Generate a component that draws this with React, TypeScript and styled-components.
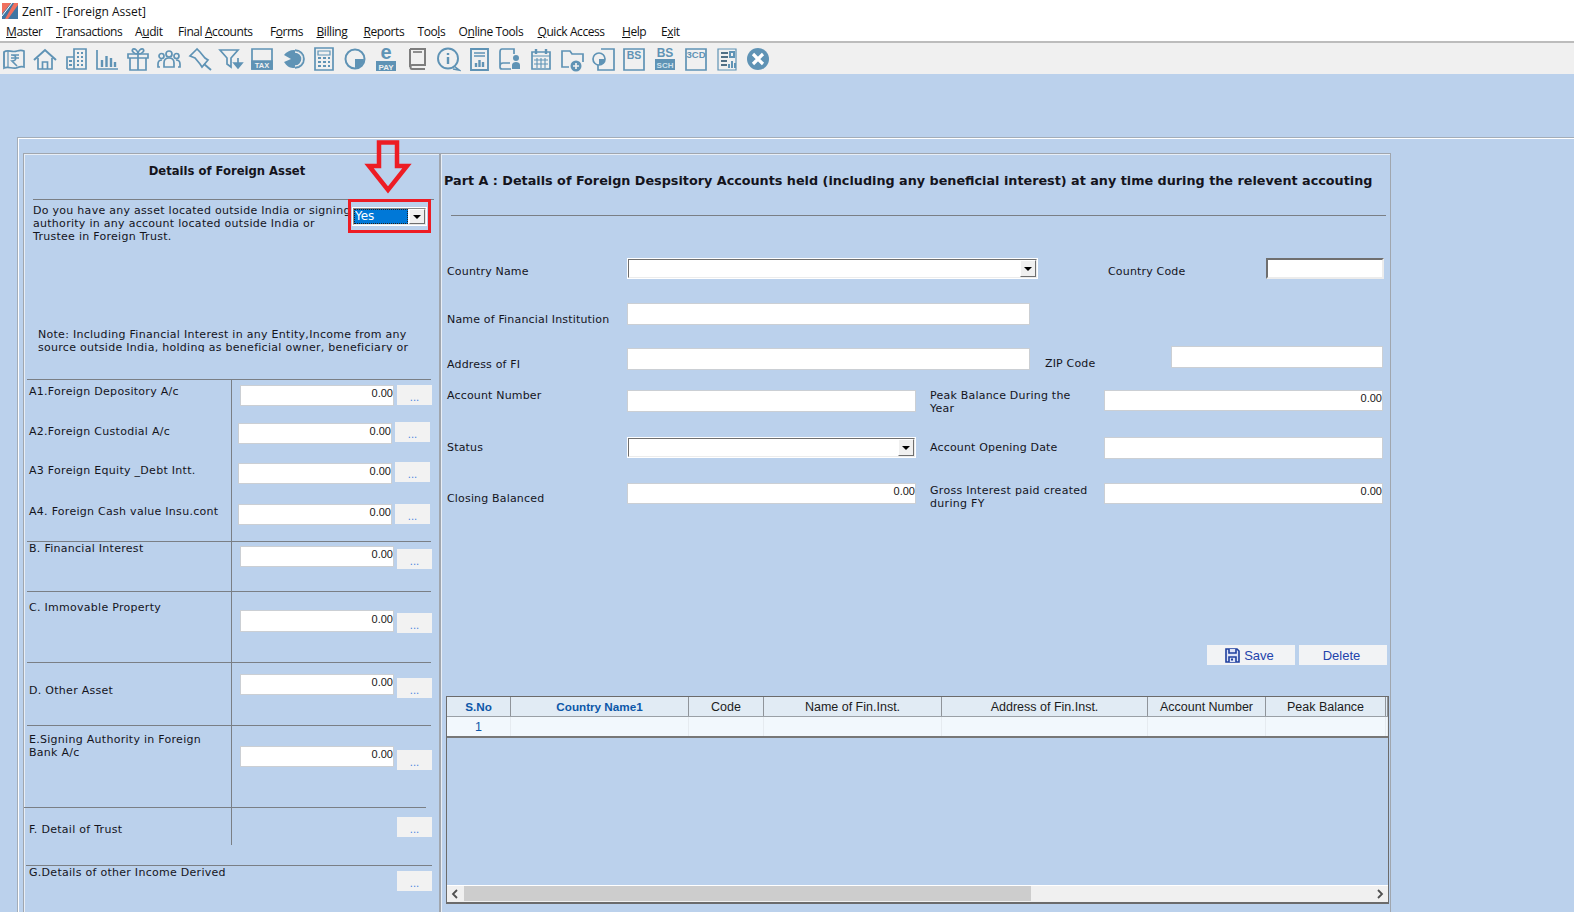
import React from 'react'
import styled, { createGlobalStyle } from 'styled-components'

const GlobalStyle = createGlobalStyle`
  html, body {
    margin: 0;
    padding: 0;
    width: 1574px;
    height: 912px;
    overflow: hidden;
    background: #bbd1ec;
    font-family: 'DejaVu Sans', Verdana, sans-serif;
    font-size: 11px;
    color: #14141c;
  }
  * { box-sizing: border-box; }
`

const Page = styled.div`
  width: 1574px;
  height: 912px;
  display: flex;
  flex-direction: column;
  overflow: hidden;
`

const TitleBar = styled.div`
  height: 22px;
  background: #fff;
  display: flex;
  align-items: center;
  gap: 4px;
  padding-left: 2px;
  font-family: 'Open Sans', 'Noto Sans', sans-serif;
  font-size: 12px;
  color: #111;
`

const MenuBar = styled.div`
  height: 19px;
  background: #fff;
  display: flex;
  align-items: center;
  padding-left: 6px;
  font-family: 'Open Sans', 'Noto Sans', sans-serif;
  font-size: 12px;
  letter-spacing: -0.42px;
  color: #111;
`

const MenuItem = styled.span<{ $w: number }>`
  width: ${(p) => p.$w}px;
  flex: none;
  white-space: nowrap;
`

const Toolbar = styled.div`
  height: 33px;
  background: #f0f0f0;
  border-top: 2px solid #bcbcbc;
  display: flex;
  align-items: center;
  gap: 5.03px;
  padding-left: 1px;
`

const ToolIcon = styled.svg`
  width: 26px;
  height: 26px;
  flex: none;
  fill: none;
  stroke: #5f93b5;
  stroke-width: 1.7;
  text { stroke: none; font-family: 'Liberation Sans', sans-serif; font-weight: 700; }
`

const Desk = styled.div`
  flex: 1;
  padding: 63px 0 0 17px;
  min-height: 0;
`

const Frame = styled.div`
  height: 100%;
  border-top: 1px solid #a3adb8;
  border-left: 1px solid #a3adb8;
  box-shadow: inset 1px 1px 0 #fff;
  padding: 15px 0 0 5px;
  display: flex;
`

const Panel = styled.div<{ $w: number }>`
  position: relative;
  width: ${(p) => p.$w}px;
  flex: none;
  border: 1px solid #a0a6ae;
  box-shadow: inset 1px 1px 0 #e8eef6;
  border-bottom: none;
`

const SidePanel = styled(Panel)`
  letter-spacing: 0.28px;
`

const FormPanel = styled(Panel)`
  letter-spacing: 0.17px;
`

const SideTitle = styled.div`
  height: 45px;
  padding-top: 10px;
  text-align: center;
  font-weight: 700;
  font-size: 11.6px;
  letter-spacing: 0;
  line-height: 15px;
  padding-right: 9px;
`

const Rule = styled.div<{ $from: number; $to: number }>`
  height: 1px;
  background: #7a7f85;
  margin-left: ${(p) => p.$from - 24}px;
  width: ${(p) => p.$to - p.$from}px;
`

const Question = styled.div`
  height: 128px;
  padding: 4px 0 0 9px;
  width: 329px;
  line-height: 13px;
`

const Note = styled.div`
  height: 24px;
  margin-left: 14px;
  width: 376px;
  line-height: 13px;
  overflow: hidden;
  margin-bottom: 27px;
`

const SummaryRow = styled.div<{ $h: number }>`
  height: ${(p) => p.$h}px;
  display: flex;
  align-items: flex-start;
`

const RowLabel = styled.div<{ $top: number; $rule?: number; $plain?: boolean }>`
  width: 208px;
  flex: none;
  height: ${(p) => (p.$rule ? `${p.$rule}px` : '100%')};
  padding: ${(p) => p.$top}px 0 0 5px;
  line-height: 13px;
  border-right: 1px solid ${(p) => (p.$plain ? 'transparent' : '#7a7f85')};
  white-space: pre-line;
`

const RowFields = styled.div<{ $x: number }>`
  flex: 1;
  display: flex;
  align-items: flex-start;
  justify-content: flex-end;
  padding-right: ${(p) => (p.$x === 5 ? 9 : 7)}px;
`

const Amount = styled.input<{ $top: number; $h?: number }>`
  width: 154px;
  height: ${(p) => p.$h ?? 21}px;
  margin-top: ${(p) => p.$top}px;
  margin-right: 3px;
  border: 1px solid #cbcfd4;
  background: #fff;
  padding: 0 0 5px 0;
  text-align: right;
  font-family: 'Liberation Sans', sans-serif;
  font-size: 11px;
  color: #181818;
  outline: none;
`

const DotsButton = styled.button<{ $top: number }>`
  width: 35px;
  height: 20px;
  margin-top: ${(p) => p.$top}px;
  border: none;
  background: #f2f2f2;
  color: #4a86e0;
  padding: 6px 0 0;
  font-family: 'DejaVu Sans', sans-serif;
  font-size: 10px;
  line-height: 14px;
`

const Marker = styled.div`
  position: absolute;
  left: 324px;
  top: 45px;
  width: 83px;
  height: 34px;
  border: 3px solid #ed1c24;
`

const MarkerArrow = styled.svg`
  position: absolute;
  left: 340px;
  top: -14px;
  width: 48px;
  height: 56px;
  fill: none;
  stroke: #ed1c24;
  stroke-width: 4.5;
`

const Combo = styled.div<{ $w: number }>`
  width: ${(p) => p.$w}px;
  height: 21px;
  background: #fff;
  border: 2px solid;
  border-color: #6f6f6f #ececec #ececec #6f6f6f;
  outline: 1px solid #fff;
  outline-offset: -1px;
  display: flex;
  justify-content: flex-end;
  align-items: stretch;
`

const SmallCombo = styled(Combo)`
  position: absolute;
  left: 328px;
  top: 53px;
  height: 19px;
  border-color: #8a8a8a #e6e6e6 #e6e6e6 #8a8a8a;
  justify-content: space-between;
  gap: 1px;
`

const ComboText = styled.div`
  flex: 1;
  background: #0078d7;
  color: #fff;
  outline: 1px dotted #222;
  outline-offset: -1px;
  font-size: 12px;
  letter-spacing: 0;
  line-height: 15px;
  padding-left: 1px;
`

const ComboArrow = styled.div`
  width: 16px;
  flex: none;
  background: #f0f0f0;
  border: 1px solid;
  border-color: #fff #6f6f6f #6f6f6f #fff;
  display: flex;
  align-items: center;
  justify-content: center;
  &::after {
    content: '';
    border-left: 4px solid transparent;
    border-right: 4px solid transparent;
    border-top: 4px solid #000;
  }
`

const PartHeading = styled.div`
  height: 61px;
  padding: 19px 0 0 3px;
  font-weight: 700;
  font-size: 12.77px;
  letter-spacing: 0;
  line-height: 16px;
  white-space: nowrap;
`

const FormBlock = styled.div`
  margin-top: 42px;
  padding-left: 6px;
`

const FormRow = styled.div<{ $cols: string; $h: number }>`
  height: ${(p) => p.$h}px;
  display: grid;
  grid-template-columns: ${(p) => p.$cols};
  align-items: start;
`

const FormLabel = styled.div<{ $top?: number; $left?: number; $track?: number }>`
  margin-top: ${(p) => p.$top ?? 0}px;
  margin-left: ${(p) => p.$left ?? 0}px;
  ${(p) => (p.$track ? `letter-spacing: ${p.$track}px;` : '')}
  line-height: 13px;
  white-space: pre-line;
`

const TextBox = styled.input<{ $top?: number; $h?: number; $sunken?: boolean }>`
  display: block;
  width: 100%;
  height: ${(p) => p.$h ?? 22}px;
  margin-top: ${(p) => p.$top ?? 0}px;
  background: #fff;
  border: ${(p) => (p.$sunken ? '2px' : '1px')} solid;
  border-color: ${(p) => (p.$sunken ? '#6f6f6f #ececec #ececec #6f6f6f' : '#cbcfd4')};
  padding: 0 0 5px 0;
  text-align: right;
  font-family: 'Liberation Sans', sans-serif;
  font-size: 11px;
  color: #181818;
  outline: none;
`

const ActionBar = styled.div`
  height: 51px;
  display: flex;
  justify-content: flex-end;
  align-items: flex-start;
  gap: 4px;
  padding-right: 3px;
`

const ActionButton = styled.button`
  width: 88px;
  height: 20px;
  border: none;
  background: #f2f3f5;
  color: #2343ac;
  font-family: 'Liberation Sans', sans-serif;
  font-size: 13px;
  display: flex;
  align-items: center;
  justify-content: center;
  gap: 4px;
  padding: 0 3px 0 0;
`

const GridBox = styled.div`
  margin-left: 5px;
  width: 943px;
  height: 208px;
  border: 1px solid #6b6b6b;
  border-bottom-width: 2px;
  display: flex;
  flex-direction: column;
  font-family: 'Liberation Sans', sans-serif;
  font-size: 12.5px;
  letter-spacing: 0;
`

const GridRow = styled.div<{ $head?: boolean }>`
  height: ${(p) => (p.$head ? 20 : 21)}px;
  flex: none;
  display: grid;
  grid-template-columns: 64px 178px 75px 178px 206px 118px 120px 1fr;
  background: ${(p) => (p.$head ? '#e1ebf4' : '#f2f8fd')};
  border-bottom: ${(p) => (p.$head ? '1px solid #9aa0a6' : '2px solid #777')};
`

const GridCell = styled.div<{ $head?: boolean; $accent?: boolean }>`
  display: flex;
  align-items: center;
  justify-content: center;
  border-right: 1px solid ${(p) => (p.$head ? '#8f949a' : '#e6ebf0')};
  color: ${(p) => (p.$accent ? '#0d57a8' : '#1c1c1c')};
  font-weight: ${(p) => (p.$accent && p.$head ? 700 : 400)};
  font-size: ${(p) => (p.$accent && p.$head ? '11.7px' : 'inherit')};
  white-space: nowrap;
  overflow: hidden;
`

const GridEmpty = styled.div`
  flex: 1;
  border-bottom: 1px solid #fff;
`

const ScrollBar = styled.div`
  height: 16px;
  flex: none;
  background: #f0f0f0;
  display: flex;
  align-items: center;
  justify-content: space-between;
  position: relative;
  padding: 0 4px;
`

const ScrollThumb = styled.div`
  position: absolute;
  left: 17px;
  top: 0;
  width: 567px;
  height: 15px;
  background: #cdcdcd;
`

const Chevron = styled.svg`
  width: 8px;
  height: 10px;
  fill: none;
  stroke: #505050;
  stroke-width: 1.8;
`

const icons: React.ReactNode[] = [
  <>
    <path d="M3 6c4-3 8 1 13-1 3-1 5-1 7 0v16c-3-1-5 0-8 1-4 1-8-2-12 0z" />
    <path d="M3 6v15M7 5v16" strokeWidth="1.2" />
    <path d="M10 9h8M10 12h8M11 9c5 0 5 6 0 6l5 5" strokeWidth="1.6" />
  </>,
  <>
    <path d="M2 14 13 4l11 10" strokeWidth="2" />
    <path d="M6 12v11h14V12" />
    <path d="M10.500 23v-7h5v7" />
  </>,
  <>
    <path d="M11 23V3h12v20zM4 23V11h7M4 23h7" />
    <path d="M14 7h2M18 7h2M14 11h2M18 11h2M14 15h2M18 15h2M14 19h2M18 19h2M6 15h3M6 19h3" strokeWidth="2" />
  </>,
  <>
    <path d="M3 4v19h21" />
    <path d="M8 21v-7M12.500 21V10M17 21v-9M21 21v-5" strokeWidth="2.400" />
  </>,
  <>
    <path d="M5 12h16v12H5zM3 8h20v4H3zM13 8v16" />
    <path d="M13 8C9 8 6 5 8 3c2-1 5 2 5 5 0-3 3-6 5-5 2 2-1 5-5 5z" />
  </>,
  <>
    <circle cx="13" cy="8" r="3" />
    <circle cx="5.500" cy="10" r="2.500" />
    <circle cx="20.500" cy="10" r="2.500" />
    <path d="M8 21v-4c0-3 2-5 5-5s5 2 5 5v4zM4 21H2v-3c0-2 1-4 4-4M22 21h2v-3c0-2-1-4-4-4" />
  </>,
  <>
    <path d="M10 3 3 10l5 2 5 6 2 3 6-7-3-2-5-6z" />
    <path d="M17 18l7 6" strokeWidth="2" />
  </>,
  <>
    <path d="M2 4h18l-7 8v9l-4-3v-6z" />
    <path d="M20 12v6M16 17h8l-4 5z" fill="#5f93b5" />
  </>,
  <>
    <path d="M3 3h20v20H3z" />
    <path d="M3 15h20v8H3z" fill="#5f93b5" />
    <text x="13" y="22" fontSize="7.500" fill="#f0f0f0" textAnchor="middle">TAX</text>
  </>,
  <>
    <path d="M14 4a9 9 0 1 1-1 18c-4 0-7-3-9-6l7-3-7-4c2-3 6-5 10-5z" fill="#5f93b5" stroke="none" />
    <path d="M15 6a7 7 0 0 1 0 14" stroke="#f0f0f0" strokeWidth="1.400" />
    <path d="M15 4a9 9 0 0 1 0 18" />
  </>,
  <>
    <path d="M4 2h18v22H4z" />
    <path d="M7 5h12v4H7z" strokeWidth="1.200" />
    <path d="M7 12h3M12 12h3M17 12h2M7 16h3M12 16h3M17 16h2M7 20h3M12 20h3M17 20h2" strokeWidth="2.200" />
  </>,
  <>
    <circle cx="13" cy="13" r="9.500" strokeWidth="2" />
    <path d="M13 13h9a9 9 0 0 1-9 9z" fill="#5f93b5" stroke="none" />
  </>,
  <>
    <text x="13" y="12.500" fontSize="20" fill="#5f93b5" textAnchor="middle">e</text>
    <path d="M3 15h20v10H3z" fill="#5f93b5" stroke="none" />
    <text x="13" y="23.500" fontSize="8" fill="#f0f0f0" textAnchor="middle">PAY</text>
  </>,
  <>
    <path d="M6 3h15v16H8c-2 0-2 4 0 4h13M6 21V3" stroke="#7d7d7d" strokeWidth="2" />
    <path d="M9 6h9" stroke="#7d7d7d" />
  </>,
  <>
    <circle cx="13" cy="12.500" r="10" strokeWidth="1.900" />
    <path d="M13 11v7M13 7v2" strokeWidth="2.400" />
    <path d="M19 20l5 4-6-1" strokeWidth="1.600" />
  </>,
  <>
    <path d="M5 3h17v21H5z" strokeWidth="1.900" />
    <path d="M8 7h11M8 10h11" />
    <path d="M10 21v-4M13.500 21v-7M17 21v-5" strokeWidth="2.400" />
  </>,
  <>
    <path d="M17 8V3H5c-2 0-2 2-2 3v15c0 1 1 2 2 2h9M3 20c0-2 1-3 3-3h7" />
    <circle cx="19" cy="12" r="3" fill="#5f93b5" stroke="none" />
    <path d="M15 23v-4c0-2 2-3 4-3s4 1 4 3v4z" fill="#5f93b5" stroke="none" />
  </>,
  <>
    <path d="M4 6h18v17H4z" />
    <path d="M8 3v5M18 3v5" strokeWidth="2.400" />
    <path d="M4 10h18M9 12v10M13 12v10M17 12v10M6 14h14M6 18h14" strokeWidth="1.100" />
  </>,
  <>
    <path d="M10 21H3V5h8l2 3h11v8" />
    <circle cx="17" cy="20" r="5.500" fill="#5f93b5" stroke="none" />
    <path d="M17 17v6M14 20h6" stroke="#f0f0f0" />
  </>,
  <>
    <path d="M11 3h13v21H8v-5" />
    <circle cx="9" cy="13" r="6" />
    <path d="M9 13h6a6 6 0 0 1-6 6z" fill="#5f93b5" stroke="none" />
  </>,
  <>
    <path d="M3 3h20v21H3z" />
    <text x="13" y="12.500" fontSize="10.500" fill="#5f93b5" textAnchor="middle">BS</text>
  </>,
  <>
    <text x="13" y="11" fontSize="12" fill="#5f93b5" textAnchor="middle">BS</text>
    <path d="M3 13h20v11H3z" fill="#5f93b5" stroke="none" />
    <text x="13" y="22" fontSize="8" fill="#cfe0ea" textAnchor="middle" fontWeight="400">SCH</text>
  </>,
  <>
    <path d="M3 3h20v21H3z" />
    <text x="13" y="12" fontSize="9.500" fill="#5f93b5" textAnchor="middle">3CD</text>
  </>,
  <>
    <path d="M4 3h18v21H4z" strokeWidth="1.200" />
    <path d="M7 7h7M7 11h7M7 15h6M7 19h6" strokeWidth="1.800" stroke="#4f6f85" />
    <path d="M16 6h4v5h-4zM15 22v-4M18 22v-7M21 22v-5" strokeWidth="2" />
  </>,
  <>
    <circle cx="13" cy="13" r="11" fill="#5f93b5" stroke="none" />
    <path d="M8 8l10 10M18 8 8 18" stroke="#fff" strokeWidth="3.200" />
  </>,
]

const menus: { before: string; key: string; after: string; w: number }[] = [
  { before: '', key: 'M', after: 'aster', w: 50 },
  { before: '', key: 'T', after: 'ransactions', w: 79 },
  { before: 'A', key: 'u', after: 'dit', w: 43 },
  { before: 'Final ', key: 'A', after: 'ccounts', w: 92 },
  { before: 'F', key: 'o', after: 'rms', w: 46.500 },
  { before: '', key: 'B', after: 'illing', w: 47 },
  { before: '', key: 'R', after: 'eports', w: 54 },
  { before: 'Too', key: 'l', after: 's', w: 41 },
  { before: 'O', key: 'n', after: 'line Tools', w: 79 },
  { before: '', key: 'Q', after: 'uick Access', w: 84.500 },
  { before: '', key: 'H', after: 'elp', w: 39 },
  { before: 'E', key: 'x', after: 'it', w: 30 },
]

type Summary = {
  label: string
  h: number
  labelTop: number
  btnTop: number
  fieldTop?: number
  fieldH?: number
  x?: number
  ruleBefore?: [number, number]
  ruleH?: number
  plain?: boolean
}

const summary: Summary[] = [
  { label: 'A1.Foreign Depository A/c', h: 42, labelTop: 5, fieldTop: 5, btnTop: 5, x: 7, ruleBefore: [27, 431] },
  { label: 'A2.Foreign Custodial A/c', h: 40, labelTop: 3, fieldTop: 1, btnTop: 0, x: 5 },
  { label: 'A3 Foreign Equity _Debt Intt.', h: 42, labelTop: 2, fieldTop: 1, btnTop: 0, x: 5 },
  { label: 'A4. Foreign Cash value Insu.cont', h: 37, labelTop: 1, fieldTop: 0, btnTop: 0, x: 5 },
  { label: 'B. Financial Interest', h: 49, labelTop: 0, fieldTop: 4, btnTop: 7, x: 7, ruleBefore: [27, 431] },
  { label: 'C. Immovable Property', h: 70, labelTop: 9, fieldTop: 18, fieldH: 22, btnTop: 21, x: 7, ruleBefore: [27, 431] },
  { label: 'D. Other Asset', h: 62, labelTop: 21, fieldTop: 11, btnTop: 15, x: 7, ruleBefore: [27, 431] },
  { label: 'E.Signing Authority in Foreign\nBank A/c', h: 81, labelTop: 7, fieldTop: 20, btnTop: 24, x: 7, ruleBefore: [27, 431] },
  { label: 'F. Detail of Trust', h: 57, labelTop: 15, btnTop: 9, ruleBefore: [24, 426], ruleH: 37 },
  { label: 'G.Details of other Income Derived', h: 50, labelTop: 0, btnTop: 5, ruleBefore: [26, 432], plain: true },
]

const columns = [
  { title: 'S.No', accent: true },
  { title: 'Country Name1', accent: true },
  { title: 'Code' },
  { title: 'Name of Fin.Inst.' },
  { title: 'Address of Fin.Inst.' },
  { title: 'Account Number' },
  { title: 'Peak Balance' },
  { title: '' },
]

const STD = '180px 289px 188px 279px'

const App: React.FC = () => {
  return (
    <Page>
      <GlobalStyle />
      <TitleBar>
        <svg width="16" height="16" viewBox="0 0 16 16">
          <rect width="16" height="16" fill="#3f76a3" />
          <path d="M0 0h9L0 11zM12 0h4v2L6 16H3z" fill="#f0705f" />
          <path d="M10 0 0 13" stroke="#fff" strokeWidth="1" />
        </svg>
        ZenIT - [Foreign Asset]
      </TitleBar>
      <MenuBar>
        {menus.map((m) => (
          <MenuItem key={m.before + m.key + m.after} $w={m.w}>
            {m.before}
            <u>{m.key}</u>
            {m.after}
          </MenuItem>
        ))}
      </MenuBar>
      <Toolbar>
        {icons.map((icon, i) => (
          <ToolIcon key={i} viewBox="0 0 26 26">
            {icon}
          </ToolIcon>
        ))}
      </Toolbar>
      <Desk>
        <Frame>
          <SidePanel $w={417}>
            <SideTitle>Details of Foreign Asset</SideTitle>
            <Rule $from={33} $to={434} />
            <Question>
              Do you have any asset located outside India or signing authority in any account located outside India or
              Trustee in Foreign Trust.
            </Question>
            <Note>
              Note: Including Financial Interest in any Entity,Income from any source outside India, holding as
              beneficial owner, beneficiary or otherwise
            </Note>
            {summary.map((row) => (
              <React.Fragment key={row.label}>
                {row.ruleBefore && <Rule $from={row.ruleBefore[0]} $to={row.ruleBefore[1]} />}
                <SummaryRow $h={row.h}>
                  <RowLabel $top={row.labelTop} $rule={row.ruleH} $plain={row.plain}>
                    {row.label}
                  </RowLabel>
                  <RowFields $x={row.x ?? 7}>
                    {row.fieldTop !== undefined && <Amount $top={row.fieldTop} $h={row.fieldH} readOnly value="0.00" />}
                    <DotsButton $top={row.btnTop}>...</DotsButton>
                  </RowFields>
                </SummaryRow>
              </React.Fragment>
            ))}
            <Marker />
            <MarkerArrow viewBox="0 0 48 56">
              <path d="M15 2.500h18V26h10L24 50 5 26h10z" />
            </MarkerArrow>
            <SmallCombo $w={75}>
              <ComboText>Yes</ComboText>
              <ComboArrow />
            </SmallCombo>
          </SidePanel>
          <FormPanel $w={951}>
            <PartHeading>
              Part A : Details of Foreign Despsitory Accounts held (including any beneficial interest) at any time during
              the relevent accouting
            </PartHeading>
            <Rule $from={34} $to={969} />
            <FormBlock>
              <FormRow $cols="180px 410px 229px 118px" $h={45}>
                <FormLabel $top={7}>Country Name</FormLabel>
                <Combo $w={411}>
                  <ComboArrow />
                </Combo>
                <FormLabel $top={7} $left={71}>
                  Country Code
                </FormLabel>
                <TextBox $h={21} $sunken readOnly />
              </FormRow>
              <FormRow $cols="180px 403px" $h={43}>
                <FormLabel $top={10}>Name of Financial Institution</FormLabel>
                <TextBox readOnly />
              </FormRow>
              <FormRow $cols="180px 403px 141px 212px" $h={44}>
                <FormLabel $top={12}>Address of FI</FormLabel>
                <TextBox $top={2} readOnly />
                <FormLabel $top={11} $left={15}>
                  ZIP Code
                </FormLabel>
                <TextBox readOnly />
              </FormRow>
              <FormRow $cols={STD} $h={47}>
                <FormLabel $top={-1}>Account Number</FormLabel>
                <TextBox readOnly />
                <FormLabel $top={-1} $left={14} $track={0.22}>
                  {'Peak Balance During the\nYear'}
                </FormLabel>
                <TextBox $h={21} readOnly value="0.00" />
              </FormRow>
              <FormRow $cols={STD} $h={46}>
                <FormLabel $top={4}>Status</FormLabel>
                <Combo $w={289}>
                  <ComboArrow />
                </Combo>
                <FormLabel $top={4} $left={14}>
                  Account Opening Date
                </FormLabel>
                <TextBox readOnly />
              </FormRow>
              <FormRow $cols={STD} $h={162}>
                <FormLabel $top={9}>Closing Balanced</FormLabel>
                <TextBox $h={21} readOnly value="0.00" />
                <FormLabel $top={1} $left={14} $track={0.3}>
                  {'Gross Interest paid created\nduring FY'}
                </FormLabel>
                <TextBox $h={21} readOnly value="0.00" />
              </FormRow>
            </FormBlock>
            <ActionBar>
              <ActionButton>
                <svg width="15" height="15" viewBox="0 0 15 15" fill="#dfe4f7" stroke="#1f3f9e" strokeWidth="1.600">
                  <path d="M1 1h11l2 2v11H1z" />
                  <path d="M4 1v4h7V1M4 14V9h7v5" />
                  <rect x="6" y="10.500" width="2" height="2" fill="#1f3f9e" stroke="none" />
                </svg>
                Save
              </ActionButton>
              <ActionButton>Delete</ActionButton>
            </ActionBar>
            <GridBox>
              <GridRow $head>
                {columns.map((c) => (
                  <GridCell key={c.title} $head $accent={c.accent}>
                    {c.title}
                  </GridCell>
                ))}
              </GridRow>
              <GridRow>
                {columns.map((c, i) => (
                  <GridCell key={c.title} $accent={i === 0}>
                    {i === 0 ? '1' : ''}
                  </GridCell>
                ))}
              </GridRow>
              <GridEmpty />
              <ScrollBar>
                <Chevron viewBox="0 0 8 10">
                  <path d="M6 1 2 5l4 4" />
                </Chevron>
                <ScrollThumb />
                <Chevron viewBox="0 0 8 10">
                  <path d="m2 1 4 4-4 4" />
                </Chevron>
              </ScrollBar>
            </GridBox>
          </FormPanel>
        </Frame>
      </Desk>
    </Page>
  )
}

export default App
